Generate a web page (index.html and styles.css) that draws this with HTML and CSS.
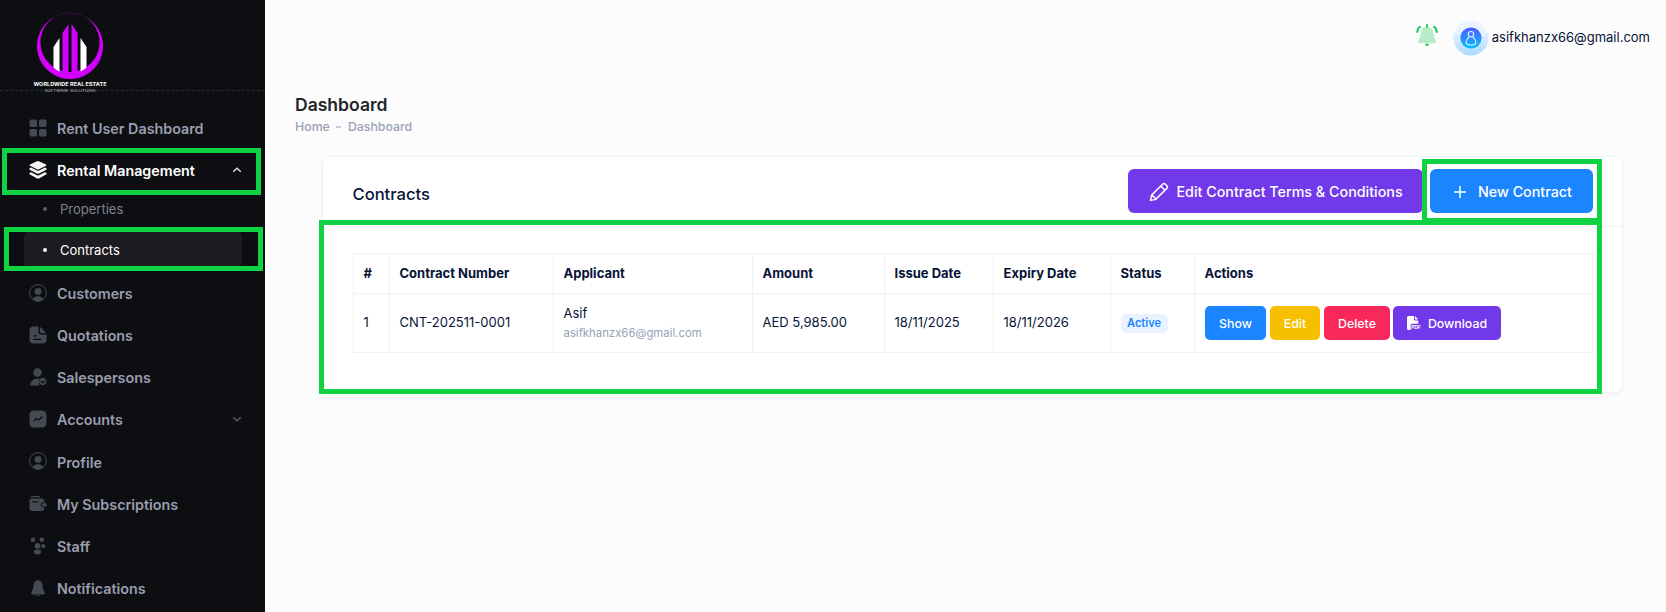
FILE: index.html
```html
<!DOCTYPE html>
<html lang="en">
<head>
  <meta charset="UTF-8" />
  <meta name="viewport" content="width=device-width, initial-scale=1.0"/>
  <title>Dashboard</title>
  <link rel="stylesheet" href="styles.css">
</head>
<body>
  <div class="sidebar">
    <div class="logo">
      <svg width="80" height="80" viewBox="0 0 80 80">
        <path fill="#d400ff" fill-rule="evenodd" d="M40 3a33 33 0 1 0 .01 0zM40 2.800a29.600 29.600 0 1 1-.01 0z"/>
        <path fill="#fff" d="M23.500 37l6-9v33.500q-3.500-1.500-6-4zM56.500 37l-6-9v33.500q3.500-1.500 6-4z"/>
        <path fill="#d400ff" d="M32.500 23l6-9v50h-6zM47.500 23l-6-9v50h6z"/>
        <path stroke="#0d0e12" stroke-width="1.500" d="M40 14v47.500"/>
        <text class="logo-name" x="3.500" y="76" textLength="73" lengthAdjust="spacingAndGlyphs">WORLDWIDE REAL ESTATE</text>
        <text class="logo-sub" x="14.500" y="81.500" textLength="51" lengthAdjust="spacingAndGlyphs">SOFTWARE SOLUTIONS</text>
      </svg>
    </div>
    <div class="menu">
      <a class="item">
        <svg class="icon" viewBox="0 0 18 18"><rect x=".5" y=".5" width="7.500" height="7.500" rx="1.500"/><rect x="10" y=".5" width="7.500" height="7.500" rx="1.500"/><rect x=".5" y="10" width="7.500" height="7.500" rx="1.500"/><rect x="10" y="10" width="7.500" height="7.500" rx="1.500"/></svg>
        <span>Rent User Dashboard</span>
      </a>
      <a class="item open">
        <svg class="icon" viewBox="0 0 18 18"><path d="M8 .3Q9 0 10 .3L17 3.400q1 .7 0 1.400L10 8.200q-1 .5-2 0L1 4.800q-1-.7 0-1.400z"/><path d="M.5 7.300L2 6.600l6 3q1 .4 2 0l6-3 1.500.7q.5 1-.5 1.600l-7 3.600q-1 .4-2 0L1 8.900q-1-.6-.5-1.600z"/><path d="M.5 12l1.500-.7 6 3q1 .4 2 0l6-3 1.500.7q.5 1-.5 1.600l-7 3.800q-1 .4-2 0l-7-3.800q-1-.6-.5-1.600z"/></svg>
        <span>Rental Management</span>
        <svg class="arrow" viewBox="0 0 10 6"><path d="M1.200 4.800L5 1.300l3.800 3.500"/></svg>
      </a>
      <div class="submenu">
        <a class="sub"><i></i>Properties</a>
        <a class="sub active"><i></i>Contracts</a>
      </div>
      <a class="item">
        <svg class="icon" viewBox="0 0 18 18"><circle class="ring" cx="9" cy="9" r="8.400"/><circle cx="9" cy="7.500" r="3.400"/><path d="M3.600 15.300C5 11.200 13 11.200 14.400 15.300Q9 19.500 3.600 15.300z"/></svg>
        <span>Customers</span>
      </a>
      <a class="item">
        <svg class="icon" viewBox="0 0 18 18"><path fill-rule="evenodd" d="M4.500.5H9.500V6Q9.500 8.500 12 8.500H17.500V13.500Q17.500 17.500 13.500 17.500H4.500Q.5 17.500.5 13.500V4.500Q.5.5 4.500.5zM4.500 9.300v1.300h3.500V9.300zM4.500 12.800v1.300h8v-1.300z"/><path d="M11 .8l6.200 6.200H12.500Q11 7 11 5.500z"/></svg>
        <span>Quotations</span>
      </a>
      <a class="item">
        <svg class="icon" viewBox="0 0 18 18"><circle cx="8.500" cy="4.500" r="4.200"/><path d="M1.200 16C2.500 12 6 10.200 10.500 10.700Q8.500 14.500 10.800 17.500H2.500Q.9 17.500 1.200 16z"/><path fill-rule="evenodd" d="M13.800 9.800a3.700 3.700 0 1 0 .01 0zM11.900 12.200l1.900 1.700 2.500-2v1.600l-2.400 2.100-2-1.700z"/></svg>
        <span>Salespersons</span>
      </a>
      <a class="item">
        <svg class="icon" viewBox="0 0 18 18"><rect x=".5" y=".5" width="17" height="17" rx="4.500"/><path class="cut" d="M4.700 11l2.500-2.500 2.600 1.500 3.500-3.500"/></svg>
        <span>Accounts</span>
        <svg class="arrow" viewBox="0 0 10 6"><path d="M1.200 1.200L5 4.700l3.800-3.500"/></svg>
      </a>
      <a class="item profile">
        <svg class="icon" viewBox="0 0 18 18"><circle class="ring" cx="9" cy="9" r="8.400"/><circle cx="9" cy="7.500" r="3.400"/><path d="M3.600 15.300C5 11.200 13 11.200 14.400 15.300Q9 19.500 3.600 15.300z"/></svg>
        <span>Profile</span>
      </a>
      <a class="item">
        <svg class="icon" viewBox="0 0 18 18"><path d="M.5 3.500Q.8 1 3.500 1H9.500Q11 1 11 2.300H3Q1.300 2.300.5 3.500z"/><path fill-rule="evenodd" d="M3 3.500H12.500Q15.500 3.500 15.500 6.700V7.200H14.500Q11.800 7.500 11.800 9.800T14.500 12.300H15.500V12.800Q15.500 16 12.500 16H3.500Q.5 16 .5 13V5.500Q.5 3.500 3 3.500zM3.300 6.300v1.300h6V6.300z"/><rect x="13" y="8" width="4.700" height="3.500" rx="1.500"/></svg>
        <span>My Subscriptions</span>
      </a>
      <a class="item">
        <svg class="icon" viewBox="0 0 18 18"><circle cx="4" cy="2.700" r="2.300"/><circle cx="12.800" cy="2.700" r="2.300"/><circle cx="8.500" cy="9" r="2.900"/><ellipse cx="8.500" cy="15" rx="3.700" ry="2.400"/><path d="M12.500 6.700a2.300 2.300 0 0 1 0 4.600q1-2.300 0-4.600z"/><circle cx="14.300" cy="9.200" r="1.900"/></svg>
        <span>Staff</span>
      </a>
      <a class="item">
        <svg class="icon" viewBox="0 0 18 18"><path d="M8 1.500Q9-.5 10 1.500Q13.500 2.500 13.500 6.500Q13.500 10 15.300 12.500Q16.500 15 14.500 15.500H3.500Q1.500 15 2.700 12.500Q4.500 10 4.500 6.500Q4.500 2.500 8 1.500zM7 16.300h4Q9 18.300 7 16.300z"/></svg>
        <span>Notifications</span>
      </a>
    </div>
    <div class="mark mark-rental"></div>
    <div class="mark mark-sub"></div>
  </div>

  <div class="main">
    <div class="topbar">
      <svg class="bell" width="22" height="22" viewBox="0 0 22 22">
        <path fill="#b6ecc8" d="M11 2.500Q17 3 17.300 9.500Q17.500 13.500 19.300 15.500Q21 19 18 19.300H4Q1 19 2.700 15.500Q4.500 13.500 4.700 9.500Q5 3 11 2.500z"/>
        <path stroke="#17c653" stroke-width="1.900" stroke-linecap="round" fill="none" d="M11 1v1.800M10.200 20.800h1.600M4 2.800Q1.500 4.300 1.200 8M18 2.800Q20.500 4.300 20.800 8"/>
      </svg>
      <svg class="avatar" width="36" height="36" viewBox="0 0 36 36">
        <defs>
          <linearGradient id="halo" x1="0" y1="0" x2="0" y2="1"><stop offset=".3" stop-color="#e8f4ff"/><stop offset="1" stop-color="#a9dafe"/></linearGradient>
          <linearGradient id="disc" x1="0" y1="0" x2="0" y2="1"><stop offset="0" stop-color="#5558ff"/><stop offset="1" stop-color="#00c0ff"/></linearGradient>
        </defs>
        <circle cx="18" cy="18" r="17.500" fill="url(#halo)"/>
        <circle cx="18" cy="18" r="10.600" fill="url(#disc)"/>
        <g fill="none" stroke="#d6efff" stroke-width="1.200"><circle cx="18" cy="14.200" r="2.700"/><path d="M16 17.200Q13 19.500 13 22.500Q13 25 18 25T23 22.500Q23 19.500 20 17.200"/></g>
      </svg>
      <span class="email">asifkhanzx66@gmail.com</span>
    </div>
    <div class="heading">
      <h1>Dashboard</h1>
      <div class="crumbs"><span>Home</span><b></b><span>Dashboard</span></div>
    </div>

    <div class="card">
      <div class="card-header">
        <h2>Contracts</h2>
        <div class="tools">
          <button class="btn purple terms">
            <svg width="20" height="20" viewBox="0 0 20 20"><path d="M1.600 18.400L2.600 13.200L13.600 2.200Q15 .8 16.400 2.200L17.800 3.600Q19.200 5 17.800 6.400L6.800 17.400zM11.800 4L16 8.200M3 13l4 4"/></svg>
            Edit Contract Terms &amp; Conditions
          </button>
          <button class="btn blue new">
            <svg width="14" height="14" viewBox="0 0 14 14"><path d="M7 1v12M1 7h12"/></svg>
            New Contract
          </button>
        </div>
      </div>
      <div class="card-body">
        <table>
          <colgroup>
            <col class="c1"><col class="c2"><col class="c3"><col class="c4"><col class="c5"><col class="c6"><col class="c7"><col>
          </colgroup>
          <tr>
            <th>#</th><th>Contract Number</th><th>Applicant</th><th>Amount</th><th>Issue Date</th><th>Expiry Date</th><th>Status</th><th>Actions</th>
          </tr>
          <tr class="row">
            <td>1</td>
            <td>CNT-202511-0001</td>
            <td class="applicant">Asif<small>asifkhanzx66@gmail.com</small></td>
            <td>AED 5,985.00</td>
            <td>18/11/2025</td>
            <td>18/11/2026</td>
            <td><span class="badge">Active</span></td>
            <td class="last">
              <div class="actions">
                <button class="btn small blue show">Show</button>
                <button class="btn small yellow edit">Edit</button>
                <button class="btn small red delete">Delete</button>
                <button class="btn small purple download">
                  <svg width="14" height="14" viewBox="0 0 14 14"><path fill="#fff" d="M1.500 0H7v3.500q0 1 1 1h3.200v3.300H5Q3.700 7.800 3.700 9.200V14H1.500Q0 14 0 12.500v-11Q0 0 1.500 0zM8 0l3.200 3.500H8z"/><text class="pdf" x="4.200" y="13.400" textLength="9.500">PDF</text></svg>
                  Download
                </button>
              </div>
            </td>
          </tr>
        </table>
      </div>
      <div class="mark mark-table"></div>
      <div class="mark mark-new"></div>
    </div>
  </div>
</body>
</html>
```
FILE: styles.css
```css
* {
  box-sizing: border-box;
}

body {
  margin: 0;
  height: 612px;
  display: flex;
  overflow: hidden;
  background: #fcfcfc;
  font-family: Inter, "Liberation Sans", sans-serif;
  font-size: 13px;
  color: #071437;
}

.sidebar {
  position: relative;
  width: 265px;
  height: 612px;
  flex-shrink: 0;
  overflow: hidden;
  background: #0d0e12;
}

.logo {
  height: 91px;
  padding: 10px 0 0 30px;
  border-bottom: 1px dashed #2a2c33;
}

.logo svg {
  display: block;
  overflow: visible;
}

.logo-name {
  fill: #fff;
  font-size: 5px;
  font-weight: 700;
}

.logo-sub {
  fill: #bbb;
  font-size: 4px;
}

.menu {
  padding-top: 16px;
}

.item {
  display: flex;
  align-items: center;
  height: 42px;
  padding: 0 23px 0 28.5px;
  font-size: 14.3px;
  font-weight: 600;
  color: #9a9cae;
}

.item.open {
  color: #fff;
}

.item.profile {
  margin-top: 1px;
}

.icon {
  width: 18px;
  height: 18px;
  margin-right: 10.5px;
  fill: #464852;
}

.open .icon {
  fill: #f5f5f5;
}

.profile .icon {
  margin-bottom: 2px;
}

.icon .ring {
  fill: none;
  stroke: #464852;
  stroke-width: 1;
}

.icon .cut {
  fill: none;
  stroke: #0d0e12;
  stroke-width: 1.3;
}

.arrow {
  width: 10px;
  height: 6px;
  margin-left: auto;
  fill: none;
  stroke: #5a5c68;
  stroke-width: 1.4;
}

.open .arrow {
  stroke: #ddd;
}

.submenu {
  height: 82px;
  margin-top: -1px;
  padding: 0 23px 0 24px;
}

.sub {
  display: flex;
  align-items: center;
  height: 37px;
  margin-bottom: 4px;
  padding-left: 19px;
  border-radius: 6px;
  color: #808290;
}

.sub i {
  width: 4px;
  height: 4px;
  margin-right: 13px;
  border-radius: 50%;
  background: #5a5c68;
}

.sub.active {
  background: #1c1c21;
  color: #fff;
}

.sub.active i {
  background: #fff;
}

.mark {
  position: absolute;
  border: 5px solid #10d344;
}

.mark-rental {
  left: 2px;
  top: 148px;
  width: 259px;
  height: 47px;
}

.mark-sub {
  left: 4px;
  top: 227px;
  width: 259px;
  height: 44px;
}

.main {
  flex: 1;
}

.topbar {
  display: flex;
  justify-content: flex-end;
  align-items: center;
  height: 75px;
  padding-right: 16px;
}

.bell {
  margin: 0 15px 5px 0;
}

.avatar {
  margin-right: 3px;
}

.email {
  margin-bottom: 2px;
}

.heading {
  height: 81px;
  padding: 19px 0 0 30px;
}

.heading h1 {
  margin: 0;
  font-size: 17.55px;
  font-weight: 600;
  line-height: 22px;
  color: #212529;
}

.crumbs {
  display: flex;
  align-items: center;
  margin-top: 2px;
  font-size: 12.35px;
  font-weight: 500;
  line-height: 18px;
  color: #99a1b7;
}

.crumbs b {
  width: 5px;
  height: 2px;
  margin: 0 7px 0 6px;
  background: #c4cada;
}

.card {
  position: relative;
  width: 1301px;
  height: 237px;
  margin-left: 57px;
  border: 1px solid #f1f1f2;
  border-radius: 8px;
  background: #fff;
  box-shadow: 0 3px 4px rgba(0, 0, 0, .03);
}

.card-header {
  display: flex;
  align-items: center;
  justify-content: space-between;
  height: 70px;
  padding: 0 29px 0 29.5px;
  border-bottom: 1px solid #f1f1f2;
}

.card-header h2 {
  margin: 5px 0 0;
  font-size: 16.575px;
  font-weight: 500;
}

.tools {
  display: flex;
  gap: 7px;
  margin-bottom: 1px;
}

.btn {
  display: flex;
  align-items: center;
  height: 44px;
  padding: 0;
  border: none;
  border-radius: 6px;
  font-family: inherit;
  font-size: 14.3px;
  font-weight: 500;
  color: #fff;
  white-space: nowrap;
}

.tools svg {
  fill: none;
  stroke: #fff;
  stroke-width: 1.5;
}

.terms {
  width: 295px;
  padding-left: 21px;
}

.terms svg {
  margin: 2px 7.5px 0 0;
}

.new {
  width: 163px;
  padding-left: 23px;
}

.new svg {
  margin: 2px 11px 0 0;
}

.small {
  justify-content: center;
  height: 34px;
  border-radius: 5px;
  font-size: 12.35px;
}

.blue { background: #1b84ff; }
.yellow { background: #f6c000; }
.red { background: #f8285a; }
.purple { background: #7239ea; }

.show { width: 61px; }
.edit { width: 50px; }
.delete { width: 66px; }

.download {
  width: 108px;
  margin-left: -1px;
}

.download svg {
  margin-right: 7px;
}

.pdf {
  fill: #fff;
  font-size: 5px;
  font-weight: 700;
}

.card-body {
  padding: 26px 29px 0 30px;
}

table {
  width: 1240px;
  border-collapse: collapse;
  table-layout: fixed;
}

.c1 { width: 36px; }
.c2 { width: 164px; }
.c3 { width: 199px; }
.c4 { width: 132px; }
.c5 { width: 109px; }
.c6 { width: 117px; }
.c7 { width: 84px; }

th,
td {
  height: 40px;
  padding: 0 9.5px;
  border: 1px solid #f1f1f2;
  text-align: left;
  white-space: nowrap;
}

th {
  padding-bottom: 2px;
  font-weight: 700;
}

.row td {
  height: 59px;
  padding-bottom: 1px;
  line-height: 19px;
}

.row .applicant,
.row .last {
  padding-bottom: 0;
}

.row .last {
  padding-left: 10px;
}

small {
  display: block;
  margin-top: 1px;
  font-size: 11.375px;
  color: #99a1b7;
}

.badge {
  display: block;
  width: 47px;
  height: 19px;
  margin-top: 2px;
  border-radius: 5px;
  background: #e9f3ff;
  font-size: 11.05px;
  font-weight: 600;
  text-align: center;
  color: #1b84ff;
}

.actions {
  display: flex;
  gap: 4px;
}

.mark-table {
  left: -4px;
  top: 63px;
  width: 1283px;
  height: 174px;
}

.mark-new {
  left: 1099px;
  top: 2px;
  width: 180px;
  height: 64px;
}
```
